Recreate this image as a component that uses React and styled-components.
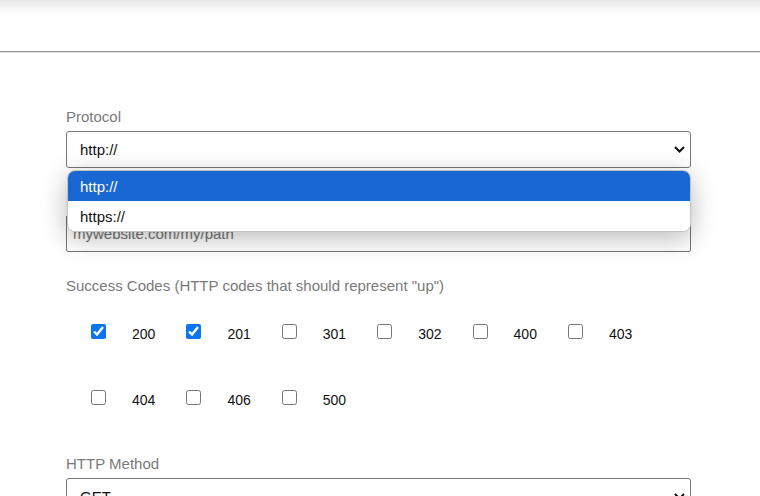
import React from "react";
import styled, { createGlobalStyle } from "styled-components";

const codes = [
  { code: "200", checked: true },
  { code: "201", checked: true },
  { code: "301" },
  { code: "302" },
  { code: "400" },
  { code: "403" },
  { code: "404" },
  { code: "406" },
  { code: "500" },
];

function Chevron() {
  return (
    <svg width="11" height="7" viewBox="0 0 11 7">
      <path d="M1 1 L5.5 5.5 L10 1" fill="none" stroke="#111" strokeWidth="2" />
    </svg>
  );
}

function App() {
  return (
    <Page>
      <GlobalStyle />
      <TopBar />
      <Form>
        <Field>
          <Label>Protocol</Label>
          <SelectWrap>
            <SelectBox>
              <span>http://</span>
              <Chevron />
            </SelectBox>
            <Dropdown>
              <Option $active>http://</Option>
              <Option>https://</Option>
            </Dropdown>
          </SelectWrap>
        </Field>
        <Field $top={24}>
          <Label>URL</Label>
          <Input placeholder="mywebsite.com/my/path" readOnly />
        </Field>
        <Field $top={25}>
          <Label>Success Codes (HTTP codes that should represent "up")</Label>
          <CodeGrid>
            {codes.map((c) => (
              <CodeItem key={c.code}>
                <Check type="checkbox" defaultChecked={!!c.checked} />
                <CodeText>{c.code}</CodeText>
              </CodeItem>
            ))}
          </CodeGrid>
        </Field>
        <Field $top={22}>
          <Label>HTTP Method</Label>
          <SelectBox>
            <span>GET</span>
            <Chevron />
          </SelectBox>
        </Field>
      </Form>
    </Page>
  );
}

const GlobalStyle = createGlobalStyle`
  body {
    margin: 0;
    background: #fff;
    font-family: "Liberation Sans", Arial, sans-serif;
  }
`;
const Page = styled.div`
  height: 496px;
  overflow: hidden;
`;
const TopBar = styled.div`
  height: 51px;
  background: linear-gradient(#e6e6e6 0px, #fafafa 10px, #fff 16px);
  border-bottom: 1px solid #999;
  box-shadow: 0 1px 0 #dcdcdc;
`;
const Form = styled.div`
  width: 625px;
  margin-left: 66px;
  padding-top: 56px;
  display: flex;
  flex-direction: column;
`;
const Field = styled.div`
  display: flex;
  flex-direction: column;
  margin-top: ${(p) => p.$top || 0}px;
`;
const Label = styled.div`
  font-size: 15px;
  line-height: 18px;
  color: #7a7a7a;
  margin-bottom: 5px;
`;
const SelectWrap = styled.div`
  position: relative;
`;
const SelectBox = styled.div`
  height: 37px;
  box-sizing: border-box;
  border: 1px solid #767676;
  border-radius: 3px;
  background: #fff;
  display: flex;
  align-items: center;
  justify-content: space-between;
  padding: 0 5px 0 13px;
  font-size: 15px;
  color: #111;
`;
const Dropdown = styled.div`
  position: absolute;
  top: calc(100% + 2px);
  left: 1px;
  right: 0;
  background: #fff;
  border: 1px solid #c4c4c4;
  border-radius: 8px;
  overflow: hidden;
  box-shadow: 0 6px 26px rgba(0, 0, 0, 0.28);
  z-index: 2;
`;
const Option = styled.div`
  height: 30px;
  display: flex;
  align-items: center;
  padding-left: 12px;
  font-size: 15px;
  color: ${(p) => (p.$active ? "#fff" : "#111")};
  background: ${(p) => (p.$active ? "#1967d2" : "#fff")};
`;
const Input = styled.input`
  height: 37px;
  box-sizing: border-box;
  border: 1px solid #767676;
  border-radius: 2px;
  padding: 0 6px;
  font-family: inherit;
  font-size: 15px;
  &::placeholder {
    color: #757575;
  }
`;
const CodeGrid = styled.div`
  display: grid;
  grid-template-columns: repeat(6, 95.4px);
  grid-auto-rows: 66px;
  padding-left: 25px;
  margin-top: 1px;
`;
const CodeItem = styled.label`
  display: flex;
  align-items: center;
`;
const Check = styled.input`
  width: 15px;
  height: 15px;
  margin: 0 26px 5px 0;
  accent-color: #0b74f0;
`;
const CodeText = styled.span`
  font-size: 14px;
  color: #111;
`;

export default App;
